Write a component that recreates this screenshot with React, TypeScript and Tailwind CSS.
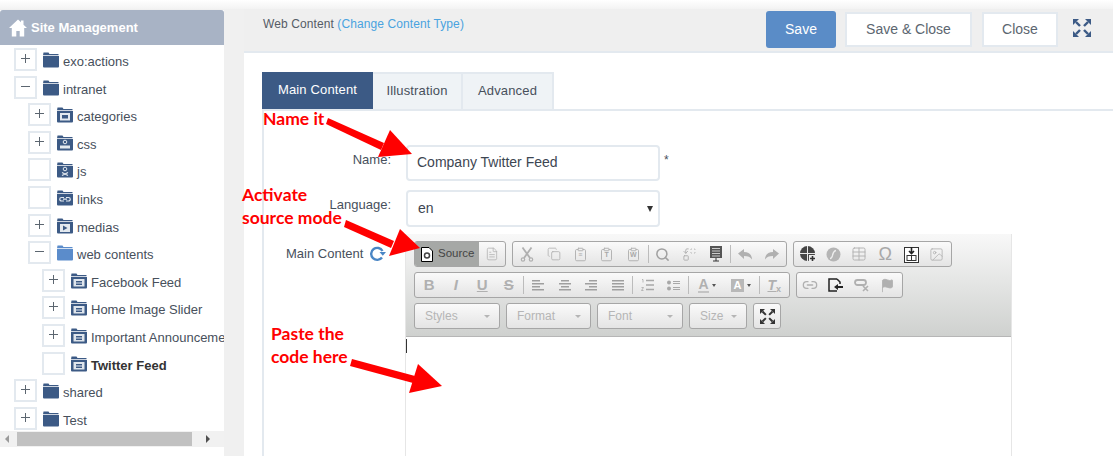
import React from 'react';
import { Copy, FileText, Search, Table, Link2, Flag, Image, Replace, Clipboard } from 'lucide-react';

const sans = 'font-["Liberation_Sans",Arial,sans-serif]';

type Glyph = 'none' | 'media' | 'gear' | 'code' | 'link' | 'play' | 'doc';

interface TreeItem {
  label: string;
  level: number;
  sign?: '+' | '-';
  glyph?: Glyph;
  open?: boolean;
  bold?: boolean;
}

const items: TreeItem[] = [
  { label: 'exo:actions', level: 0, sign: '+' },
  { label: 'intranet', level: 0, sign: '-' },
  { label: 'categories', level: 1, sign: '+', glyph: 'media' },
  { label: 'css', level: 1, sign: '+', glyph: 'gear' },
  { label: 'js', level: 1, glyph: 'code' },
  { label: 'links', level: 1, glyph: 'link' },
  { label: 'medias', level: 1, sign: '+', glyph: 'play' },
  { label: 'web contents', level: 1, sign: '-', open: true },
  { label: 'Facebook Feed', level: 2, sign: '+', glyph: 'doc' },
  { label: 'Home Image Slider', level: 2, sign: '+', glyph: 'doc' },
  { label: 'Important Announcements', level: 2, sign: '+', glyph: 'doc' },
  { label: 'Twitter Feed', level: 2, glyph: 'doc', bold: true },
  { label: 'shared', level: 0, sign: '+' },
  { label: 'Test', level: 0, sign: '+' },
];

const FolderIcon = ({ glyph = 'none', open }: { glyph?: Glyph; open?: boolean }) => {
  const fill = open ? '#5b8ccb' : '#3c5a85';
  return (
    <svg width="16" height="16" viewBox="0 0 16 16" className="shrink-0">
      <path d="M0.500 0.500h5l1 1.500h9v1.200h-15.500z" fill={fill} />
      <path d="M0 4h16v10.500a1 1 0 0 1-1 1H1a1 1 0 0 1-1-1z" fill={fill} />
      {glyph === 'media' && (
        <>
          <rect x="3" y="6" width="10" height="7.500" fill="#e3e9ef" />
          <rect x="5" y="8" width="6" height="3.500" fill="#3c5a85" />
        </>
      )}
      {glyph === 'doc' && (
        <>
          <rect x="2.500" y="6" width="11" height="7.500" fill="#dfe5ec" />
          <rect x="5" y="8" width="6" height="1.500" fill="#3c5a85" />
          <rect x="5" y="10.500" width="6" height="1.500" fill="#3c5a85" />
        </>
      )}
      {glyph === 'gear' && (
        <>
          <circle cx="8" cy="7" r="1.800" fill="none" stroke="#e3e9ef" strokeWidth="1" />
          <rect x="3" y="10.500" width="10" height="3" fill="#e3e9ef" />
        </>
      )}
      {glyph === 'code' && (
        <>
          <circle cx="8" cy="7" r="1.800" fill="none" stroke="#e3e9ef" strokeWidth="1" />
          <path d="M5 10.500l6 3M11 10.500l-6 3" stroke="#e3e9ef" strokeWidth="1.200" />
        </>
      )}
      {glyph === 'link' && (
        <path d="M7 7.500H4.500a1.700 1.700 0 0 0 0 3.500H7M9 7.500h2.500a1.700 1.700 0 0 1 0 3.500H9M6 9.200h4" fill="none" stroke="#e3e9ef" strokeWidth="1.200" />
      )}
      {glyph === 'play' && (
        <>
          <rect x="3" y="6" width="10" height="8" fill="#e3e9ef" />
          <path d="M6 7.500l4.500 2.500L6 12.500z" fill="#3c5a85" />
        </>
      )}
    </svg>
  );
};

const TreeRow = ({ item }: { item: TreeItem }) => (
  <div className="flex h-[27.6px] items-start shrink-0">
    <div
      className={
        item.level === 0
          ? 'ml-[14px] w-[23px] h-[23px] border-2 border-[#e3e9ef] flex items-center justify-center shrink-0 pb-[2px]'
          : item.level === 1
            ? 'ml-[28px] w-[23px] h-[23px] border-2 border-[#e3e9ef] flex items-center justify-center shrink-0 pb-[2px]'
            : 'ml-[42px] w-[23px] h-[23px] border-2 border-[#e3e9ef] flex items-center justify-center shrink-0 pb-[2px]'
      }
    >
      {item.sign && (
        <svg width="9" height="9" viewBox="0 0 9 9">
          <path d={item.sign === '+' ? 'M0 4.500h9M4.500 0v9' : 'M0 4.500h9'} stroke="#5c6670" strokeWidth="1" />
        </svg>
      )}
    </div>
    <div className="ml-[6px] mt-[4px] flex items-center">
      <FolderIcon glyph={item.glyph} open={item.open} />
    </div>
    <span className={`ml-[4px] mt-[6px] text-[13px] leading-[16px] whitespace-nowrap ${item.bold ? 'font-bold text-[#333]' : 'text-[#47505c]'}`}>
      {item.label}
    </span>
  </div>
);

const Sidebar = () => (
  <aside className="w-[224px] shrink-0 bg-white flex flex-col mt-px">
    <div className="h-[35px] bg-[#a8b3c5] rounded-t-[3px] flex items-center pl-[9px] text-white font-bold text-[13px] shrink-0">
      <svg width="18" height="18" viewBox="0 0 18 18" className="mr-[4px]">
        <path d="M9 0.500L0 9h2.800v8.500h4.500V12h3.400v5.500h4.500V9H18L14.500 5.700V1.500h-2.500v1.800z" fill="#fff" />
      </svg>
      Site Management
    </div>
    <div className="h-[386px] pt-[3px] overflow-hidden flex flex-col shrink-0">
      {items.map((item) => (
        <TreeRow key={item.label} item={item} />
      ))}
    </div>
    <div className="h-[16px] bg-[#f1f1f1] flex items-center shrink-0">
      <svg width="17" height="16" viewBox="0 0 17 16" className="shrink-0">
        <path d="M5 8l4-4v8z" fill="#9a9a9a" />
      </svg>
      <div className="w-[175px] h-[14px] bg-[#c1c1c1]" />
      <div className="flex-1 flex justify-center">
        <svg width="10" height="16" viewBox="0 0 10 16">
          <path d="M7 8L3 4v8z" fill="#505050" />
        </svg>
      </div>
    </div>
  </aside>
);

const ExpandIcon = ({ color, size }: { color: string; size: number }) => (
  <svg width={size} height={size} viewBox="0 0 18 18" fill={color} stroke={color}>
    <path d="M0 0h6L0 6z" stroke="none" />
    <path d="M3 3l4 4" strokeWidth="2.400" />
    <path d="M18 0h-6L18 6z" stroke="none" />
    <path d="M15 3l-4 4" strokeWidth="2.400" />
    <path d="M0 18h6L0 12z" stroke="none" />
    <path d="M3 15l4-4" strokeWidth="2.400" />
    <path d="M18 18h-6L18 12z" stroke="none" />
    <path d="M15 15l-4-4" strokeWidth="2.400" />
  </svg>
);

const Header = () => (
  <div className="h-[42px] bg-[#efefef] border-b-2 border-[#e3e9ef] flex items-start shrink-0 pl-[19px] pr-[22px] box-content">
    <div className="mt-[7px] text-[12px] leading-[16px] tracking-[0.1px] text-[#555c66] whitespace-nowrap">
      Web Content <span className="text-[#4aa3df]">(Change Content Type)</span>
    </div>
    <div className="ml-auto flex items-start mt-[2px]">
      <button className="w-[70px] h-[37px] rounded-[3px] bg-[#5a8cc7] text-white text-[14px]">Save</button>
      <button className="ml-[9px] mt-px w-[127px] h-[35px] bg-white border-2 border-[#e3e9ef] text-[#5c6670] text-[14px]">Save &amp; Close</button>
      <button className="ml-[10px] mt-px w-[76px] h-[35px] bg-white border-2 border-[#e3e9ef] text-[#5c6670] text-[14px]">Close</button>
      <div className="ml-[15px] mt-[8px]">
        <ExpandIcon color="#3c5a85" size={18} />
      </div>
    </div>
  </div>
);

const Tabs = () => (
  <div className="flex h-[38px] ml-[18px] mt-[19px] text-[13px] tracking-[0.15px] shrink-0">
    <div className="w-[111px] pb-[2px] bg-[#3c5a85] text-white flex items-center justify-center">Main Content</div>
    <div className="w-[90px] pb-[2px] bg-[#eff3f6] border-2 border-b-0 border-l-0 border-[#e3e9ef] text-[#47505c] flex items-center justify-center">Illustration</div>
    <div className="w-[91px] pb-[2px] bg-[#eff3f6] border-2 border-b-0 border-l-0 border-[#e3e9ef] text-[#47505c] flex items-center justify-center">Advanced</div>
  </div>
);

const Sep = () => <div className="w-px h-[18px] mx-px bg-[#bcbcbc] shrink-0" />;

const Btn = ({ children }: { children?: React.ReactNode }) => (
  <div className="w-[26.5px] h-full flex items-center justify-center shrink-0">{children}</div>
);

const NarrowBtn = ({ children }: { children?: React.ReactNode }) => (
  <div className="w-[25.800px] h-full flex items-center justify-center shrink-0">{children}</div>
);

const Group = ({ children }: { children: React.ReactNode }) => (
  <div className="h-[26px] px-px flex items-center rounded-[3px] border border-[#a6a6a6] bg-gradient-to-b from-[#fafafa] to-[#e4e4e4] shrink-0">
    {children}
  </div>
);

const Combo = ({ label, width }: { label: string; width: string }) => (
  <div className={`${width} h-[26px] rounded-[3px] border border-[#a6a6a6] bg-gradient-to-b from-[#fafafa] to-[#e4e4e4] flex items-center pl-[10px] pr-[9px] text-[12px] text-[#b5b5b5] shrink-0`}>
    <span>{label}</span>
    <span className="ml-auto w-0 h-0 border-x-[3px] border-x-transparent border-t-[3px] border-t-[#b5b5b5]" />
  </div>
);

const gray = '#b0b0b0';

const PasteIcon = ({ letter }: { letter: string }) => (
  <span className="relative flex items-center justify-center">
    <Clipboard size={15} color={gray} strokeWidth={1.5} />
    <span className="absolute top-[4px] text-[7px] leading-[8px] font-bold text-[#a8a8a8]">{letter}</span>
  </span>
);

const Lines = ({ kind }: { kind: 'left' | 'center' | 'right' | 'full' }) => {
  const rows = [
    kind === 'full' ? [0, 12] : kind === 'left' ? [0, 8] : kind === 'right' ? [4, 8] : [2, 8],
    [0, 12],
    kind === 'full' ? [0, 12] : kind === 'left' ? [0, 8] : kind === 'right' ? [4, 8] : [2, 8],
    [0, 12],
  ];
  return (
    <svg width="12" height="11" viewBox="0 0 12 11">
      {rows.map((r, i) => (
        <rect key={i} x={r[0]} y={i * 3} width={r[1]} height="1.500" fill="#9f9f9f" />
      ))}
    </svg>
  );
};

const Toolbar = () => (
  <div className="h-[103px] bg-gradient-to-b from-[#f8f8f8] to-[#cfd1cf] border-b border-[#b6b6b6] pl-[8px] pt-[7px] flex flex-col gap-[5px]">
    <div className="flex gap-[6px]">
      <Group>
        <div className="w-[64px] h-[24px] -ml-px bg-[#a6a8a6] flex items-center pl-[6px] text-[11.500px] text-[#444] rounded-l-[2px]">
          <svg width="12" height="15" viewBox="0 0 12 15" className="mr-[5px] shrink-0">
            <path d="M0.500 0.500h7.500l3.500 3.500v10.500H0.500z" fill="#fff" stroke="#000" />
            <circle cx="6" cy="8.500" r="2.500" fill="none" stroke="#444" strokeWidth="1.500" />
          </svg>
          Source
        </div>
        <div className="w-[25px] flex items-center justify-center shrink-0">
          <FileText size={14} color={gray} strokeWidth={1.3} />
        </div>
      </Group>
      <Group>
        <Btn>
          <svg width="14" height="15" viewBox="0 0 14 15" fill="none" stroke={gray} strokeWidth="1.800">
            <path d="M2.500 0.500L10 11M11.500 0.500L4 11" />
            <circle cx="3" cy="12.500" r="1.700" strokeWidth="1.200" />
            <circle cx="11" cy="12.500" r="1.700" strokeWidth="1.200" />
          </svg>
        </Btn>
        <Btn>
          <Copy size={14} color={gray} strokeWidth={1.4} />
        </Btn>
        <Btn>
          <PasteIcon letter="≡" />
        </Btn>
        <Btn>
          <PasteIcon letter="T" />
        </Btn>
        <Btn>
          <PasteIcon letter="W" />
        </Btn>
        <Sep />
        <Btn>
          <Search size={15} color="#a0a0a0" strokeWidth={2.4} />
        </Btn>
        <Btn>
          <Replace size={15} color={gray} strokeWidth={1.5} />
        </Btn>
        <Btn>
          <svg width="14" height="16" viewBox="0 0 14 16">
            <rect x="1" y="0" width="12" height="12" fill="#555" />
            <path d="M3 2.500h8M3 5h8M3 7.500h8M3 10h8" stroke="#ccc" strokeWidth="1" />
            <path d="M7 12v3M4 15h6" stroke="#333" strokeWidth="1" />
          </svg>
        </Btn>
        <Sep />
        <Btn>
          <svg width="14" height="11" viewBox="0 0 14 11">
            <path d="M0 4.500L6 0v3c5 0 8 3 8 7.500-1.500-2.500-4-3.500-8-3.500v3z" fill={gray} />
          </svg>
        </Btn>
        <Btn>
          <svg width="14" height="11" viewBox="0 0 14 11">
            <path d="M14 4.500L8 0v3c-5 0-8 3-8 7.500 1.500-2.500 4-3.500 8-3.500v3z" fill={gray} />
          </svg>
        </Btn>
      </Group>
      <Group>
        <NarrowBtn>
          <svg width="16" height="16" viewBox="0 0 16 16">
            <circle cx="7.500" cy="7.500" r="7.500" fill="#444" />
            <path d="M0 7.500h15M7.500 0v15" stroke="#e8e8e8" strokeWidth="1" />
            <rect x="9" y="9" width="7" height="7" fill="#ececec" />
            <path d="M12.500 10v5M10 12.500h5" stroke="#333" strokeWidth="1.600" />
          </svg>
        </NarrowBtn>
        <NarrowBtn>
          <svg width="15" height="15" viewBox="0 0 15 15">
            <circle cx="7.500" cy="7.500" r="7" fill="#b5b5b5" />
            <path d="M10 3.500C7.500 4 7 6 6.500 8.500 6 10.500 5.500 11.500 4 11.500" stroke="#eee" strokeWidth="1.300" fill="none" />
          </svg>
        </NarrowBtn>
        <NarrowBtn>
          <Table size={16} color={gray} strokeWidth={1.4} />
        </NarrowBtn>
        <NarrowBtn>
          <span className="text-[18px] leading-[18px] text-[#a8a8a8]">Ω</span>
        </NarrowBtn>
        <NarrowBtn>
          <svg width="15" height="17" viewBox="0 0 15 17">
            <rect x="0.500" y="1.500" width="14" height="15" fill="#fff" stroke="#333" />
            <path d="M7.500 1v6M5 5l2.500 2.500L10 5" stroke="#222" strokeWidth="1.600" fill="none" />
            <rect x="3" y="9.500" width="9" height="5" fill="none" stroke="#333" />
            <path d="M7.500 9.500v5" stroke="#333" />
          </svg>
        </NarrowBtn>
        <NarrowBtn>
          <Image size={15} color={gray} strokeWidth={1.3} />
        </NarrowBtn>
      </Group>
    </div>
    <div className="flex gap-[6px]">
      <Group>
        <Btn><span className="text-[15px] font-bold text-[#b0b0b0]">B</span></Btn>
        <Btn><span className="text-[15px] font-bold italic text-[#b0b0b0]">I</span></Btn>
        <Btn><span className="text-[15px] font-bold underline text-[#b0b0b0]">U</span></Btn>
        <Btn><span className="text-[15px] font-bold line-through text-[#b0b0b0]">S</span></Btn>
        <Sep />
        <Btn><Lines kind="left" /></Btn>
        <Btn><Lines kind="center" /></Btn>
        <Btn><Lines kind="right" /></Btn>
        <Btn><Lines kind="full" /></Btn>
        <Sep />
        <Btn>
          <svg width="13" height="12" viewBox="0 0 13 12">
            <path d="M5 1.500h8M5 6h8M5 10.500h8" stroke="#a8a8a8" strokeWidth="1.300" />
            <path d="M1 0.500h1v3M0.500 8.500h2l-2 3h2" stroke="#a8a8a8" strokeWidth="0.800" fill="none" />
          </svg>
        </Btn>
        <Btn>
          <svg width="13" height="11" viewBox="0 0 13 11">
            <circle cx="2" cy="2.500" r="2" fill="#a8a8a8" />
            <circle cx="2" cy="8.500" r="2" fill="#a8a8a8" />
            <path d="M6 1.500h7M6 3.500h7M6 7.500h7M6 9.500h7" stroke="#a8a8a8" strokeWidth="1" />
          </svg>
        </Btn>
        <Sep />
        <div className="w-[34px] flex items-center justify-center gap-[3px] shrink-0">
          <span className="text-[14px] leading-[14px] font-bold text-[#b0b0b0] border-b-2 border-[#c4c4c4]">A</span>
          <span className="w-0 h-0 border-x-[2.500px] border-x-transparent border-t-[3px] border-t-[#555]" />
        </div>
        <div className="w-[34px] flex items-center justify-center gap-[3px] shrink-0">
          <span className="w-[13px] h-[13px] bg-[#b8b8b8] text-white text-[11px] leading-[13px] font-bold text-center">A</span>
          <span className="w-0 h-0 border-x-[2.500px] border-x-transparent border-t-[3px] border-t-[#555]" />
        </div>
        <Sep />
        <Btn><span className="text-[14px] font-bold italic underline text-[#b0b0b0]">T<sub className="text-[9px] not-italic">x</sub></span></Btn>
      </Group>
      <Group>
        <NarrowBtn>
          <Link2 size={16} color={gray} strokeWidth={2} />
        </NarrowBtn>
        <NarrowBtn>
          <svg width="16" height="14" viewBox="0 0 16 14">
            <path d="M9 1H1v12h8" fill="none" stroke="#222" strokeWidth="1.500" />
            <path d="M9 1l3 3v2" fill="none" stroke="#222" strokeWidth="1.500" />
            <path d="M6 9l4-3v2h5v2h-5v2z" fill="#222" />
          </svg>
        </NarrowBtn>
        <NarrowBtn>
          <svg width="16" height="14" viewBox="0 0 16 14" fill="none" stroke={gray}>
            <rect x="1" y="2" width="11" height="5" rx="2.500" strokeWidth="1.800" />
            <path d="M9 8l5 5M14 8l-5 5" strokeWidth="1.600" />
          </svg>
        </NarrowBtn>
        <NarrowBtn>
          <Flag size={15} color={gray} fill={gray} strokeWidth={1.3} />
        </NarrowBtn>
      </Group>
    </div>
    <div className="flex gap-[6px]">
      <Combo label="Styles" width="w-[86px]" />
      <Combo label="Format" width="w-[85px]" />
      <Combo label="Font" width="w-[86px]" />
      <Combo label="Size" width="w-[58px]" />
      <div className="w-[28px] h-[26px] rounded-[3px] border border-[#a6a6a6] bg-gradient-to-b from-[#fafafa] to-[#e4e4e4] flex items-center justify-center shrink-0">
        <ExpandIcon color="#333" size={15} />
      </div>
    </div>
  </div>
);

const Form = () => (
  <div className="ml-[18px] flex-1 border-l-2 border-t-2 border-[#e3e9ef] -mt-px min-h-0 text-[13px] text-[#47505c]">
    <div className="flex items-start mt-[34px]">
      <div className="w-[127px] text-right pt-[7px] leading-[16px]">Name:</div>
      <div className="ml-[15px] w-[254px] h-[36px] border-2 border-[#e3e9ef] rounded-[4px] flex items-center pl-[9px] pb-px text-[14px] text-[#3d4652]">
        Company Twitter Feed
      </div>
      <div className="ml-[4px] pt-[7px] text-[12px] leading-[16px]">*</div>
    </div>
    <div className="flex items-start mt-[9px]">
      <div className="w-[127px] text-right pt-[7px] leading-[16px] whitespace-nowrap">Language:</div>
      <div className="ml-[15px] w-[254px] h-[37px] border-2 border-[#e3e9ef] rounded-[4px] flex items-center pl-[10px] pr-[5px] text-[14px] text-[#3d4652]">
        en
        <span className="ml-auto w-0 h-0 border-x-[3.500px] border-x-transparent border-t-[6px] border-t-[#333]" />
      </div>
    </div>
    <div className="flex items-start mt-[7px]">
      <div className="w-[119px] ml-[22px] pt-[12px] leading-[16px] whitespace-nowrap flex items-center shrink-0">
        Main Content
        <svg width="16" height="16" viewBox="0 0 16 16" className="ml-[7px]" fill="none" stroke="#4a86c5" strokeWidth="2.400">
          <path d="M12.500 5A6 6 0 1 0 12 11.500" />
          <path d="M9.500 6h6.500l-3.200 3.800z" fill="#4a86c5" stroke="none" />
        </svg>
      </div>
      <div className="w-[607px] border-x border-[#e6e6e6] h-[240px] shrink-0">
        <Toolbar />
        <div className="w-px h-[14px] bg-[#333] mt-[2px]" />
      </div>
    </div>
  </div>
);

const Note = ({ x, y, lines }: { x: string; y: string; lines: string[] }) => (
  <div className={`absolute ${x} ${y} font-["Lato",sans-serif] font-bold text-[17.500px] leading-[23px] text-[#ff0000] whitespace-nowrap`}>
    {lines.map((line) => (
      <div key={line}>{line}</div>
    ))}
  </div>
);

const Annotations = () => (
  <>
    <Note x="left-[263px]" y="top-[107px]" lines={['Name it']} />
    <Note x="left-[242px]" y="top-[183px]" lines={['Activate', 'source mode']} />
    <Note x="left-[271px]" y="top-[322px]" lines={['Paste the', 'code here']} />
    <svg className="absolute left-0 top-0 pointer-events-none" width="1113" height="456" viewBox="0 0 1113 456">
      <path d="M328 118L384 143L381 150L326 124z" fill="#ff0000" />
      <path d="M390 130L412 154L378 157z" fill="#ff0000" />
      <path d="M346 220L394 241L391 248L344 227z" fill="#ff0000" />
      <path d="M400 229L420 248L389 256z" fill="#ff0000" />
      <path d="M352 359L415 376L413 383L350 366z" fill="#ff0000" />
      <path d="M418 364L442 386L409 393z" fill="#ff0000" />
    </svg>
  </>
);

export default function App() {
  return (
    <div className={`relative w-[1113px] h-[456px] overflow-hidden bg-[#f0f0f0] flex flex-col ${sans}`}>
      <div className="h-[9px] bg-gradient-to-b from-[#ffffff] to-[#f3f3f3] shrink-0" />
      <div className="flex flex-1 min-h-0">
        <Sidebar />
        <div className="w-[20px] shrink-0" />
        <div className="flex-1 min-w-0 bg-white flex flex-col overflow-hidden">
          <Header />
          <Tabs />
          <Form />
        </div>
      </div>
      <Annotations />
    </div>
  );
}
